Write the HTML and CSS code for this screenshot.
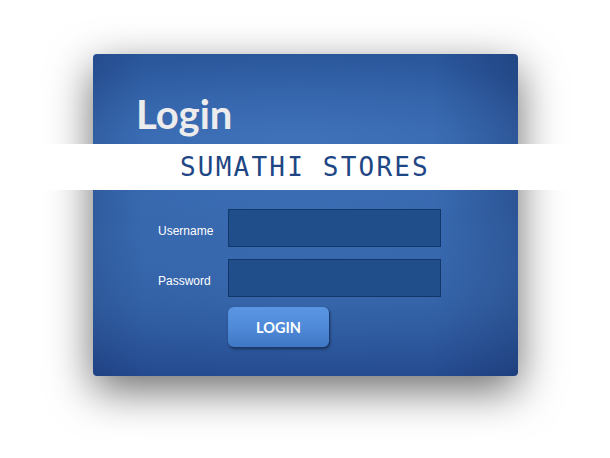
FILE: index.html
```html
<!DOCTYPE html>
<html lang="en">
<head>
<meta charset="utf-8">
<title>Login - Sumathi Stores</title>
<link rel="stylesheet" href="styles.css">
</head>
<body>
<div class="stage">
  <div class="panel">
    <h1 class="title">Login</h1>
    <form class="form">
      <label class="label" for="u">Username</label>
      <input class="field" id="u" type="text">
      <label class="label" for="p">Password</label>
      <input class="field" id="p" type="password">
      <button class="btn" type="button">LOGIN</button>
    </form>
  </div>
  <div class="band">SUMATHI STORES</div>
</div>
</body>
</html>
```
FILE: styles.css
```css
html, body {
  margin: 0;
  padding: 0;
  background: #ffffff;
}

.stage {
  position: relative;
  width: 610px;
  height: 458px;
  padding: 54px 0 0 93px;
  box-sizing: border-box;
  overflow: hidden;
}

.panel {
  width: 425px;
  height: 322px;
  box-sizing: border-box;
  border-radius: 4px;
  padding: 36px 0 0 43px;
  box-shadow: 0 14px 44px rgba(0, 0, 0, 0.58);
  background:
    radial-gradient(ellipse 300px 90px at 48% 28%, rgba(72, 124, 196, 0.55), rgba(72, 124, 196, 0) 100%),
    radial-gradient(ellipse 520px 120px at 55% 72%, rgba(70, 120, 190, 0.45), rgba(70, 120, 190, 0) 100%),
    linear-gradient(to right, rgba(15, 35, 85, 0.2), rgba(15, 35, 85, 0) 12%, rgba(15, 35, 85, 0) 80%, rgba(15, 35, 85, 0.32)),
    linear-gradient(to bottom, #2a569b 0%, #3566ad 25%, #3465ab 55%, #2b589c 78%, #21458a 100%);
}

.title {
  margin: 0;
  font-family: Lato, "Open Sans", sans-serif;
  font-weight: 700;
  font-size: 40px;
  line-height: 48px;
  color: #ececec;
}

.form {
  display: grid;
  grid-template-columns: 70px 213px;
  row-gap: 12px;
  margin: 71px 0 0 22px;
}

.label {
  align-self: center;
  padding-top: 5px;
  font-family: "Liberation Sans", Arial, sans-serif;
  font-size: 12px;
  color: #ffffff;
}

.field {
  width: 213px;
  height: 38px;
  box-sizing: border-box;
  margin: 0;
  border: 1px solid #12376a;
  background: #1f4e8b;
  outline: none;
}

.btn {
  grid-column: 2;
  justify-self: start;
  margin-top: -2px;
  width: 101px;
  height: 40px;
  border: none;
  border-radius: 6px;
  background: linear-gradient(to bottom, #5a96e2 0%, #4f8ad8 50%, #3f77c4 100%);
  box-shadow: 1px 1px 0 #1b3a6b, 1px 2px 3px rgba(0, 0, 0, 0.45);
  font-family: Lato, "Open Sans", sans-serif;
  font-weight: 700;
  font-size: 14.5px;
  color: #ffffff;
  padding: 0;
}

.band {
  position: absolute;
  left: 0;
  right: 0;
  top: 144px;
  height: 46px;
  background: #ffffff;
  text-align: center;
  font-family: "DejaVu Sans Mono", "Liberation Mono", monospace;
  font-size: 26px;
  letter-spacing: 2.2px;
  line-height: 46px;
  color: #1f4684;
}
```
